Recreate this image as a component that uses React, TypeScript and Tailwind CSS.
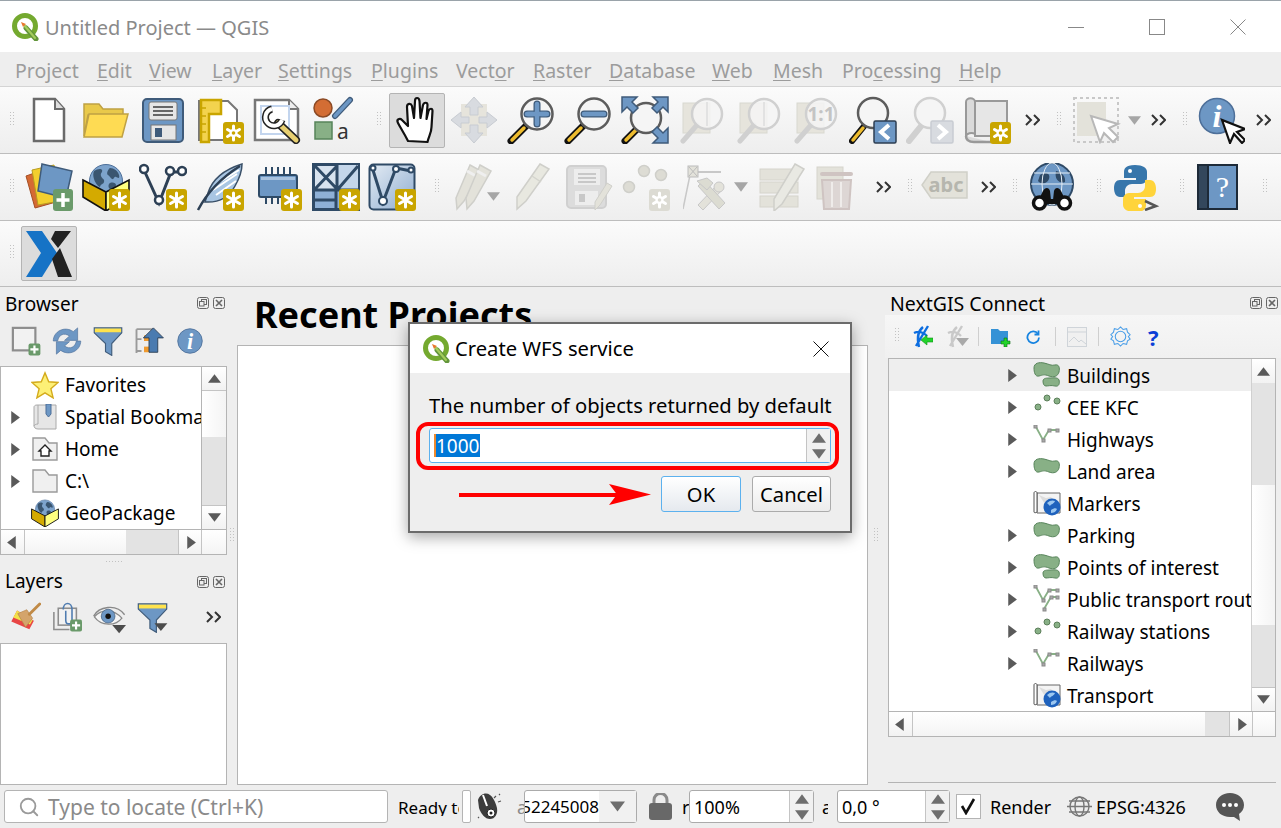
import React from 'react'
import { Search } from 'lucide-react'

const Ic = ({ children, size = 48 }: { children: React.ReactNode; size?: number }) => (
  <svg width={size} height={size} viewBox="0 0 48 48" className="shrink-0">
    {children}
  </svg>
)

const Grip = ({ className = '', h = 17 }: { className?: string; h?: number }) => (
  <div className={`flex shrink-0 items-center ${className}`}>
    <svg width="5" height={h}>
      {Array.from({ length: Math.floor(h / 3) }).map((_, i) => (
        <g key={i} fill="#c2c2c2">
          <rect x="0" y={i * 3} width="1" height="1" />
          <rect x="3" y={i * 3} width="1" height="1" />
        </g>
      ))}
    </svg>
  </div>
)

const Chevrons = ({ className = '' }: { className?: string }) => (
  <div className={`flex shrink-0 items-center justify-center ${className}`}>
    <svg width="15" height="12" fill="none" stroke="#333" strokeWidth="2">
      <path d="M1 1l5 5-5 5M9 1l5 5-5 5" />
    </svg>
  </div>
)

const Tri = ({ dir, c = '#5a5a5a', s = 12 }: { dir: 'up' | 'down' | 'left' | 'right'; c?: string; s?: number }) => {
  const d = { up: 'M6 2l6 8H0z', down: 'M0 2h12l-6 8z', left: 'M9 0v12L1 6z', right: 'M3 0l8 6-8 6z' }[dir]
  return (
    <svg width={s} height={s} viewBox="0 0 12 12" className="shrink-0">
      <path d={d} fill={c} />
    </svg>
  )
}

const Slot = ({ children, className = 'w-[57px]' }: { children: React.ReactNode; className?: string }) => (
  <div className={`flex shrink-0 items-center justify-center ${className}`}>{children}</div>
)

const StarBadge = ({ gear = false, fill = '#c9a500' }: { gear?: boolean; fill?: string }) => (
  <g>
    <rect x="27" y="26" width="21" height="22" rx="3" fill={fill} />
    <path d="M37.5 30v14M31.5 33.5l12 7M31.5 40.5l12-7" stroke="#fff" strokeWidth="3" strokeLinecap="round" />
    {gear && <circle cx="37.5" cy="37" r="4" fill="#fff" />}
    {gear && <circle cx="37.5" cy="37" r="1.8" fill={fill} />}
  </g>
)

const PlusBadge = () => (
  <g>
    <rect x="28" y="26" width="20" height="22" rx="3" fill="#6a9a6a" />
    <path d="M38 30v14M31.5 37h13" stroke="#fff" strokeWidth="3.5" />
  </g>
)

const Handle = () => (
  <g>
    <path d="M20 29L4 45" stroke="#111" strokeWidth="7" strokeLinecap="round" />
    <path d="M17 32L5 44" stroke="#eebc2e" strokeWidth="3.5" strokeLinecap="round" />
  </g>
)

const NewDoc = () => (
  <Ic>
    <path d="M9 3h21l9 10v32H9z" fill="#fff" stroke="#6a6a6a" strokeWidth="2.5" />
    <path d="M30 3v10h9" fill="#ddd" stroke="#6a6a6a" strokeWidth="2" />
  </Ic>
)

const Folder = () => (
  <Ic>
    <path d="M2 8h15l4 5h20v6H6L2 40z" fill="#e9c94a" stroke="#bfa144" strokeWidth="1.5" />
    <path d="M7 18h39l-6 23H2z" fill="#fedb53" stroke="#bfa144" strokeWidth="1.5" />
  </Ic>
)

const Save = () => (
  <Ic>
    <rect x="4" y="3" width="40" height="43" rx="4" fill="#6d97c4" stroke="#3f5b7a" strokeWidth="2" />
    <rect x="10" y="6" width="28" height="18" rx="2" fill="#e6e6e6" stroke="#777" />
    <path d="M14 11h20M14 15h20M14 19h20" stroke="#666" strokeWidth="2" />
    <rect x="12" y="29" width="25" height="15" fill="#e6e6e6" stroke="#777" />
    <rect x="16" y="32" width="7" height="9" fill="#3f5b7a" />
  </Ic>
)

const LayoutIcon = () => (
  <Ic>
    <path d="M3 5h29l9 9v30H3z" fill="#fff" stroke="#777" strokeWidth="2" />
    <path d="M5 4h20v14H13v28H5z" fill="#f3d34e" stroke="#c9a500" strokeWidth="2.5" />
    <path d="M5 12h5M5 20h5M5 28h5M5 36h5" stroke="#c9a500" strokeWidth="1.5" />
    <StarBadge gear />
  </Ic>
)

const LayoutManager = () => (
  <Ic>
    <path d="M2 4h34l9 9v31H2z" fill="#fff" stroke="#777" strokeWidth="2.5" />
    <path d="M36 4v9h9" fill="#eee" stroke="#777" strokeWidth="2" />
    <path d="M8 10h28v28H8z" fill="none" stroke="#c3d5ee" strokeWidth="2" />
    <path d="M25 27l18 17" stroke="#222" strokeWidth="8" strokeLinecap="round" />
    <path d="M25 27l18 17" stroke="#e7cf71" strokeWidth="5" strokeLinecap="round" />
    <path d="M19 13A8.500 8.500 0 1 0 29 24" fill="none" stroke="#222" strokeWidth="7" />
    <path d="M19 13A8.500 8.500 0 1 0 29 24" fill="none" stroke="#fff" strokeWidth="4" />
  </Ic>
)

const StyleManager = () => (
  <Ic>
    <circle cx="13" cy="12" r="9" fill="#d36d34" stroke="#8c4a24" strokeWidth="1.5" />
    <path d="M25 20L40 4" stroke="#3f5b7a" strokeWidth="6" strokeLinecap="round" />
    <path d="M25 20L40 4" stroke="#6d97c4" strokeWidth="3.5" strokeLinecap="round" />
    <rect x="5" y="26" width="17" height="17" fill="#88b086" stroke="#57845a" strokeWidth="1.5" />
    <text x="27" y="43" fontSize="21" fontFamily="Noto Sans, sans-serif" fill="#333">a</text>
  </Ic>
)

const HandIcon = () => (
  <Ic>
    <path
      d="M15 45C11 37 7 31 5 27c-2-4 2-5 4-3l6 6L14 11c0-4 4-4 5-1l2 12 1-17c0-4 4-4 4.500 0l1 17 2.500-13c1-3 4.500-3 4.500 0l-1 14 2-8c1-3 4-3 4 0l-1 16c0 6-3 10-4 15z"
      fill="#fff"
      stroke="#111"
      strokeWidth="2.2"
      strokeLinejoin="round"
    />
  </Ic>
)

const PanSel = () => (
  <Ic>
    <rect x="11" y="8" width="26" height="32" fill="#e6e4dc" />
    <path d="M24 1l9 10h-5v8h-8v-8h-5zM24 47l-9-10h5v-8h8v8h5zM1 24l10-8v5h8v6h-8v5zM47 24l-10 8v-5h-8v-6h8v-5z" fill="#d8dbe0" stroke="#c8ccd2" />
  </Ic>
)

const ZoomIn = ({ minus = false }: { minus?: boolean }) => (
  <Ic>
    <Handle />
    <circle cx="30" cy="18" r="15.5" fill="#f5f5f5" stroke="#5c5c5c" strokeWidth="2.5" />
    <path d="M20 18h20" stroke="#3f5b7a" strokeWidth="7" strokeLinecap="round" />
    <path d="M20 18h20" stroke="#6d97c4" strokeWidth="4.5" strokeLinecap="round" />
    {!minus && <path d="M30 8v20" stroke="#3f5b7a" strokeWidth="7" strokeLinecap="round" />}
    {!minus && <path d="M30 8v20M21 18h18" stroke="#6d97c4" strokeWidth="4.5" strokeLinecap="round" />}
  </Ic>
)

const ZoomFull = () => (
  <Ic>
    <Handle />
    <circle cx="25" cy="22" r="15" fill="#f5f5f5" stroke="#5c5c5c" strokeWidth="2.5" />
    <g fill="#6d97c4" stroke="#3f5b7a" strokeWidth="1.5">
      <path d="M1 1h15l-5 5 6 6-5 5-6-6-5 5zM47 1v15l-5-5-6 6-5-5 6-6-5-5zM47 47H32l5-5-6-6 5-5 6 6 5-5z" />
    </g>
  </Ic>
)

const ZoomDisabled = ({ label }: { label?: string }) => (
  <Ic>
    <rect x="5" y="7" width="27" height="30" fill="#e6e4dc" stroke="#d8d8d0" />
    <path d="M19 29L5 45" stroke="#d0d0d0" strokeWidth="5" strokeLinecap="round" />
    <circle cx="29" cy="18" r="15" fill="#f5f5f5" fillOpacity="0.85" stroke="#d0d0d0" strokeWidth="2.5" />
    {label ? (
      <text x="29" y="25" textAnchor="middle" fontSize="19" fontWeight="700" fontFamily="Noto Sans, sans-serif" fill="#c4c4c4">{label}</text>
    ) : (
      <path d="M29 6v24" stroke="#dcdcdc" strokeWidth="1.5" />
    )}
  </Ic>
)

const ZoomHist = ({ next = false }: { next?: boolean }) => (
  <Ic>
    <path d="M16 29L3 45" stroke={next ? '#d0d0d0' : '#111'} strokeWidth="6" strokeLinecap="round" />
    {!next && <path d="M14 32L4 44" stroke="#eebc2e" strokeWidth="3.5" strokeLinecap="round" />}
    <circle cx="24" cy="17" r="15" fill="#f5f5f5" stroke={next ? '#d0d0d0' : '#5c5c5c'} strokeWidth="2.5" />
    <rect x="25" y="25" width="22" height="22" rx="1.5" fill={next ? '#d8dbe0' : '#6d97c4'} stroke={next ? '#c8ccd2' : '#2d3e52'} strokeWidth="1.5" />
    <path d={next ? 'M32 29l8 7-8 7' : 'M40 29l-8 7 8 7'} fill="none" stroke="#fff" strokeWidth="4" />
  </Ic>
)

const BookmarkNew = () => (
  <Ic>
    <path d="M12 5h32v35H12z" fill="#e6e6e6" stroke="#999" strokeWidth="2" />
    <path d="M3 6c0-5 9-5 9 0v32c-3-2-9-1-9 3z" fill="#dadada" stroke="#999" strokeWidth="2" />
    <path d="M3 40c0 5 4 6 8 6h17" fill="#dadada" stroke="#999" strokeWidth="2.5" />
    <StarBadge gear />
  </Ic>
)

const SelectIcon = () => (
  <Ic>
    <rect x="1" y="2" width="44" height="44" fill="none" stroke="#c8c8c8" strokeWidth="2" strokeDasharray="3 3" />
    <rect x="4" y="6" width="29" height="34" fill="#e3e2da" />
    <path d="M18 20l9 26 4-9 9 9 5-5-9-9 9-4z" fill="#fff" stroke="#b8b8b8" strokeWidth="2" />
  </Ic>
)

const InfoIcon = ({ cursor = false, size = 48 }: { cursor?: boolean; size?: number }) => (
  <Ic size={size}>
    <circle cx={cursor ? 20 : 24} cy={cursor ? 20 : 24} r={cursor ? 17.5 : 21} fill="#6d97c4" stroke="#4d6f99" strokeWidth="1.5" />
    <text x={cursor ? 20 : 24} y={cursor ? 31 : 37} textAnchor="middle" fontSize={cursor ? 32 : 38} fontWeight="700" fontStyle="italic" fontFamily="Liberation Serif, serif" fill="#fff">i</text>
    {cursor && <path d="M25 24l8 23 4-9 8 9 3-3-8-8 8-3z" fill="#fff" stroke="#111" strokeWidth="2.2" />}
  </Ic>
)

const DataSource = () => (
  <Ic>
    <path d="M1 13l20-7 10 33-21 6z" fill="#d56a33" stroke="#a44e24" />
    <path d="M7 7l22-5 6 36-22 4z" fill="#f3cf2e" stroke="#b89c20" />
    <path d="M17 1l30 7-6 27-28-7z" fill="#6d97c4" stroke="#3f5b7a" strokeWidth="1.5" />
    <PlusBadge />
  </Ic>
)

const GeoPackage = ({ badge = true }: { badge?: boolean }) => (
  <Ic>
    <circle cx="24" cy="18" r="16.500" fill="#7da3cc" stroke="#4d6f99" />
    <path d="M12 8c3-2 7-3 8-1s-2 3-1 6 4 3 3 6-3 1-4 5c-3-1-5-5-6-8s-1-6 0-8zM28 5c4 0 8 3 9 7s-1 3-3 2-2 3-4 2-2-3-4-4 0-6 2-7zM28 20c3-1 6 0 6 2s-4 5-6 4-2-5 0-6z" fill="#3a5570" />
    <path d="M1 17l23 12v19L1 34z" fill="#d4aa00" stroke="#111" strokeWidth="1.6" />
    <path d="M24 29l23-12v17L24 48z" fill="#ffff80" stroke="#111" strokeWidth="1.6" />
    {badge && <StarBadge />}
  </Ic>
)

const VLine = () => (
  <Ic>
    <path d="M5 7l15 33L32 9h10" fill="none" stroke="#2d4055" strokeWidth="3" />
    <g fill="#fff" stroke="#2d4055" strokeWidth="2.5">
      <circle cx="5" cy="6" r="4" />
      <circle cx="20" cy="37" r="4" />
      <circle cx="31" cy="8" r="4" />
      <circle cx="43" cy="8" r="4" />
    </g>
    <StarBadge />
  </Ic>
)

const Feather = () => (
  <Ic>
    <path d="M46 1C30 6 17 14 12 30l-3 9c14 1 24-5 30-16 4-7 7-14 7-22z" fill="#a9c6e3" stroke="#3a5068" strokeWidth="1.5" />
    <path d="M20 32l20-14M17 27l24-16M22 20l21-13" stroke="#fff" strokeWidth="2" />
    <path d="M44 3C28 13 12 28 2 47" fill="none" stroke="#2d4055" strokeWidth="2.5" />
    <StarBadge />
  </Ic>
)

const Chip = () => (
  <Ic>
    <path d="M12 4v8M18 4v8M24 4v8M30 4v8M36 4v8M12 34v7M18 34v7M24 34v7" stroke="#2e4a66" strokeWidth="2" />
    <rect x="5" y="12" width="38" height="22" rx="2" fill="#6d97c4" stroke="#2e4a66" strokeWidth="2" />
    <rect x="7" y="14" width="34" height="3" fill="#a8c2de" />
    <StarBadge />
  </Ic>
)

const GridIcon = () => (
  <Ic>
    <rect x="1.5" y="1.5" width="45" height="45" fill="#8eb0d6" stroke="#2f4a66" strokeWidth="3" />
    <path d="M26 2h20v24H26z" fill="#c4d6ea" />
    <path d="M3 3h22v23H3z" fill="#d8e3ef" />
    <path d="M2 27h44M25 2v24M24 27v19M2 37h22M3 3l22 23M25 3L3 26M46 3L26 26" stroke="#2f4a66" strokeWidth="3" fill="none" />
    <StarBadge />
  </Ic>
)

const MeshIcon = () => (
  <Ic>
    <defs>
      <linearGradient id="mesh" x1="0" y1="0" x2="1" y2="1">
        <stop offset="0" stopColor="#e4ecf4" />
        <stop offset="1" stopColor="#8eacd0" />
      </linearGradient>
    </defs>
    <rect x="1.5" y="1.5" width="45" height="45" rx="4" fill="url(#mesh)" stroke="#2f4a66" strokeWidth="2" />
    <path d="M4 4l11 35L28 5l15 3" fill="none" stroke="#2f4a66" strokeWidth="3" />
    <g fill="#fff" stroke="#2f4a66" strokeWidth="2">
      <circle cx="15" cy="38" r="4" />
      <circle cx="28" cy="6" r="3" />
      <circle cx="5" cy="5" r="2.5" />
      <circle cx="43" cy="7" r="2.5" />
    </g>
    <StarBadge />
  </Ic>
)

const Pencil = ({ x = 0 }: { x?: number }) => (
  <g transform={`translate(${x} 0)`}>
    <path d="M16 2l11 6L10 38l-7 8-1-11z" fill="#e3e2da" stroke="#cfcfca" strokeWidth="1.5" />
    <path d="M13 8l9 5" stroke="#efefef" strokeWidth="3" />
  </g>
)

const PencilsIcon = () => (
  <Ic>
    <Pencil />
    <Pencil x={10} />
  </Ic>
)

const PencilIcon = () => (
  <Ic>
    <path d="M34 1l9 5-23 32-9 8 0-12z" fill="#e8e8e0" stroke="#cfcfca" strokeWidth="1.5" />
    <path d="M26 13l9 6" stroke="#d4d4ce" strokeWidth="1.5" />
  </Ic>
)

const SaveEdits = () => (
  <Ic>
    <rect x="2" y="3" width="39" height="42" rx="4" fill="#dcdcdc" stroke="#d0d0d0" strokeWidth="2" />
    <rect x="9" y="6" width="26" height="16" fill="#ededed" />
    <path d="M13 11h18M13 15h18M13 19h18" stroke="#c8c8c8" strokeWidth="2" />
    <rect x="10" y="28" width="23" height="14" fill="#ededed" />
    <rect x="14" y="31" width="6" height="8" fill="#c8c8c8" />
    <path d="M42 20l5 3-12 19-5 5v-8z" fill="#e3e2da" stroke="#cfcfca" />
  </Ic>
)

const AddPoint = () => (
  <Ic>
    <g fill="#dddcd4" stroke="#cfcfca" strokeWidth="1.5">
      <circle cx="7" cy="24" r="5.5" />
      <circle cx="22" cy="8" r="5.5" />
      <circle cx="39" cy="12" r="5.5" />
    </g>
    <StarBadge gear fill="#dcdbd3" />
  </Ic>
)

const VertexTool = () => (
  <Ic>
    <path d="M7 12L0 46" stroke="#c8c8c8" strokeWidth="1.5" />
    <path d="M14 9h24" stroke="#c8c8c8" strokeWidth="2" />
    <rect x="5" y="3" width="10" height="11" fill="#e3e2da" stroke="#bbb" />
    <path d="M6 4l8 9M14 4l-8 9" stroke="#bbb" />
    <path d="M34 22l-19 20 5 5 19-20z" fill="#e3e2da" stroke="#c8c8c8" />
    <path d="M15 23l21 23 6-6-21-23z" fill="#dcdcd2" stroke="#c8c8c8" />
    <path d="M14 18l10-3 6 5-6 7z" fill="#dcdcd2" stroke="#c8c8c8" />
    <circle cx="36" cy="24" r="5" fill="#e3e2da" stroke="#c8c8c8" />
  </Ic>
)

const EditTable = () => (
  <Ic>
    <g fill="#e3e2da" stroke="#d5d4cc">
      <rect x="2" y="6" width="38" height="11" />
      <rect x="2" y="19" width="38" height="11" />
      <rect x="2" y="33" width="38" height="11" />
    </g>
    <path d="M37 1l9 5-22 35-8 7 0-12z" fill="#e9e9e3" stroke="#cfcfca" strokeWidth="1.5" />
  </Ic>
)

const TrashIcon = () => (
  <Ic>
    <rect x="5" y="4" width="26" height="32" fill="#e3e2da" stroke="#d5d4cc" />
    <rect x="8" y="9" width="33" height="4" rx="2" fill="#cfc4c2" />
    <path d="M10 17h29l-2 29H12z" fill="#ddd6d4" stroke="#cfc4c2" strokeWidth="2" />
    <path d="M20 19v25M29 19v25" stroke="#efecea" strokeWidth="2" />
  </Ic>
)

const AbcLabel = () => (
  <Ic>
    <path d="M11 9h36v26H11L2 22z" fill="#e3e2da" stroke="#d0d0c8" strokeWidth="1.5" />
    <text x="26" y="29" textAnchor="middle" fontSize="20" fontWeight="700" fontFamily="Noto Sans, sans-serif" fill="#b6b6ae">abc</text>
  </Ic>
)

const GlobeBinoc = () => (
  <Ic>
    <circle cx="24" cy="21" r="21" fill="#6d97c4" stroke="#2f4a66" strokeWidth="2" />
    <path d="M12 12c5-4 11-2 9 4-2 5-8 6-11 2zM28 8c6 1 10 6 9 11-5 2-11-2-9-11z" fill="#2f4a66" />
    <g fill="none" stroke="#e6eef6" strokeWidth="1">
      <ellipse cx="24" cy="21" rx="10" ry="21" />
      <path d="M3 21h42M6 10h36" />
    </g>
    <path d="M15 28c2-4 6-4 7 0l1 9h2l1-9c1-4 5-4 7 0l6 12H9z" fill="#111" />
    <circle cx="11.5" cy="40" r="6" fill="#fff" stroke="#111" strokeWidth="3.5" />
    <circle cx="36.5" cy="40" r="6" fill="#fff" stroke="#111" strokeWidth="3.5" />
    <rect x="18" y="36" width="12" height="5" fill="#111" />
  </Ic>
)

const PythonIcon = () => {
  const snake = 'M22 2c-10 0-11 4-11 7v6h12v2H7c-4 0-6 3-6 8s2 9 6 9h5v-6c0-4 3-7 7-7h9c3 0 6-3 6-6V9c0-4-4-7-12-7z'
  return (
    <Ic>
      <path d={snake} fill="#3776ab" />
      <circle cx="17" cy="8" r="2" fill="#fff" />
      <g transform="rotate(180 22 25.5)">
        <path d={snake} fill="#ffd43b" />
        <circle cx="17" cy="8" r="2" fill="#fff" />
      </g>
      <path d="M32 38l11 5-11 4" fill="none" stroke="#555" strokeWidth="2.5" />
    </Ic>
  )
}

const HelpBook = () => (
  <Ic>
    <rect x="3" y="1" width="41" height="46" fill="#1d2a38" />
    <rect x="5" y="3" width="8" height="42" fill="#33475c" />
    <rect x="15" y="3" width="27" height="42" fill="#6d97c4" />
    <text x="28.5" y="34" textAnchor="middle" fontSize="30" fontFamily="Liberation Serif, serif" fill="#fff">?</text>
  </Ic>
)

const QLogo = ({ size = 28 }: { size?: number }) => (
  <svg width={size} height={size} viewBox="0 0 28 28" className="shrink-0">
    <circle cx="13" cy="13" r="10.5" fill="none" stroke="#74a92f" strokeWidth="5" />
    <path d="M14 15l10 11" stroke="#62953a" strokeWidth="5" strokeLinecap="round" />
    <path d="M12 12l11 13" stroke="#a3cc5a" strokeWidth="2.2" strokeLinecap="round" />
    <path d="M9 9l5 2-3 3z" fill="#e8782e" />
  </svg>
)

const LogoX = () => (
  <svg width="48" height="50" viewBox="0 0 48 50">
    <path d="M1 2h16l15 22-15 24H1l15-24z" fill="#1673c6" />
    <path d="M30 2h16L33 19l-7-9zM27 30l8-11 12 29H33z" fill="#222" />
  </svg>
)

const NewLayer = () => (
  <Ic size={30}>
    <rect x="3" y="3" width="36" height="36" fill="#f2f2f2" stroke="#8d8d8d" strokeWidth="3.5" />
    <rect x="28" y="28" width="19" height="19" rx="3" fill="#6a9a6a" />
    <path d="M37.5 31v13M31 37.5h13" stroke="#fff" strokeWidth="3.5" />
  </Ic>
)

const RefreshIcon = () => (
  <Ic size={30}>
    <path d="M2 24C2 9 20-1 34 9l7-6v20H20l8-7c-9-6-17-2-19 8z" fill="#6d97c4" stroke="#4d6f99" strokeWidth="1" />
    <path d="M46 24C46 39 28 49 14 39l-7 6V25h21l-8 7c9 6 17 2 19-8z" fill="#6d97c4" stroke="#4d6f99" strokeWidth="1" />
  </Ic>
)

const FilterIcon = ({ down = false, size = 30 }: { down?: boolean; size?: number }) => (
  <Ic size={size}>
    <path d="M2 3h44v8L30 28v19l-10-6V28L2 11z" fill="#6d97c4" stroke="#3f5b7a" strokeWidth="1.8" />
    <path d="M3 4h42v6H3z" fill="#ffe34d" />
    {down && <path d="M27 33h20l-10 12z" fill="#4c4c4c" />}
  </Ic>
)

const CollapseIcon = () => (
  <Ic size={30}>
    <path d="M4 5v38M4 5h26M4 21h8M4 40h8" stroke="#9a9a9a" strokeWidth="3" fill="none" />
    <rect x="16" y="15" width="9" height="9" fill="#f09a2e" />
    <rect x="16" y="33" width="9" height="9" fill="#f09a2e" />
    <path d="M31 3L15 19h9v23h14V19h9z" fill="#4a7bb0" stroke="#2d4055" strokeWidth="1.5" />
  </Ic>
)

const BrushIcon = () => (
  <Ic size={31}>
    <path d="M2 30l9-17 26 16-7 13z" fill="#e84545" />
    <path d="M5 24l6-11 24 15-4 7z" fill="#f3e24a" />
    <path d="M12 18l14-6 9 13-11 14z" fill="#d4a46b" stroke="#b57f43" />
    <path d="M30 19L46 3" stroke="#c08a47" strokeWidth="4.5" strokeLinecap="round" />
  </Ic>
)

const ClipIcon = () => (
  <Ic size={30}>
    <path d="M3 16v28h25" fill="none" stroke="#8d8d8d" strokeWidth="2.5" />
    <rect x="10" y="10" width="29" height="27" fill="#f2f2f2" stroke="#8d8d8d" strokeWidth="2.5" />
    <path d="M18 12c0-13 14-13 14 0v17c0 8-10 8-10 0V14" fill="none" stroke="#4f7cb0" strokeWidth="2.5" />
    <rect x="29" y="28" width="19" height="19" rx="3" fill="#6a9a6a" />
    <path d="M38.5 31v13M32 37.5h13" stroke="#fff" strokeWidth="3.5" />
  </Ic>
)

const EyeIcon = () => (
  <Ic size={33}>
    <path d="M1 22C8 8 34 3 46 20" fill="none" stroke="#888" strokeWidth="2" />
    <path d="M2 23c10-12 28-12 40 2-9 12-30 12-40-2z" fill="#f5f5f5" stroke="#8a8a8a" strokeWidth="1.8" />
    <circle cx="22" cy="22" r="10" fill="#6d97c4" stroke="#3f5b7a" />
    <circle cx="22" cy="22" r="4" fill="#111" />
    <path d="M28 35h20l-10 12z" fill="#4c4c4c" />
  </Ic>
)

const FloatBtns = () => (
  <div className="flex items-center gap-[4px]">
    <svg width="12" height="12" fill="none" stroke="#666">
      <rect x="0.5" y="0.5" width="11" height="11" rx="2" />
      <rect x="4.5" y="2.5" width="5" height="5" />
      <rect x="2.5" y="4.5" width="4.500" height="4.500" fill="#eee" />
    </svg>
    <svg width="12" height="12" fill="none" stroke="#666">
      <rect x="0.5" y="0.5" width="11" height="11" rx="2" />
      <path d="M3 3l6 6M9 3l-6 6" strokeWidth="1.6" />
    </svg>
  </div>
)

const TreeStar = () => (
  <svg width="28" height="28" viewBox="0 0 30 30">
    <path d="M15 2l4 9.5 10 .8-7.7 6.6 2.4 9.9L15 23.5l-8.7 5.3 2.4-9.9L1 12.3l10-.8z" fill="#fdf076" stroke="#d4ab1d" strokeWidth="1.5" />
  </svg>
)

const TreeBookmark = () => (
  <svg width="26" height="26" viewBox="0 0 26 26">
    <path d="M5 1h19v24H6c-3 0-4-2-4-3V3c0-1 1-2 3-2z" fill="#e6e6e6" stroke="#aaa" />
    <path d="M6 1v19c-2 0-4 1-4 2" fill="none" stroke="#aaa" />
    <path d="M14 0h5v10l-2.500 3-2.500-3z" fill="#6d97c4" stroke="#4d6f99" />
  </svg>
)

const TreeFolder = ({ home = false }: { home?: boolean }) => (
  <svg width="26" height="24" viewBox="0 0 26 24">
    <path d="M1 1h12l4 5h8v17H1z" fill="#f0f0f0" stroke="#9a9a9a" strokeWidth="1.4" />
    {home && <path d="M13 8l-6 6h2v5h8v-5h2z" fill="#fff" stroke="#222" strokeWidth="1.4" />}
  </svg>
)

const GreenBlob = ({ two = false }: { two?: boolean }) => (
  <svg width="28" height="28" viewBox="0 0 28 28">
    <path d="M1 7c0-5 5-6 10-5s7 3 11 2 5 3 4 7-5 6-10 4-6-1-10 0-5-4-5-8z" fill="#88b086" stroke="#57845a" />
    {two && <path d="M10 20c0-3 4-3 7-3s8-1 9 2 0 7-4 6-7 0-9 0-3-2-3-5z" fill="#88b086" stroke="#57845a" />}
  </svg>
)

const GreenPoints = () => (
  <svg width="28" height="28" viewBox="0 0 28 28">
    <g fill="#88b086" stroke="#5d7f5b">
      <circle cx="5" cy="14" r="3" />
      <circle cx="14" cy="5" r="3" />
      <circle cx="24" cy="8" r="3" />
    </g>
  </svg>
)

const GreenLines = ({ two = false }: { two?: boolean }) => (
  <svg width="28" height="28" viewBox="0 0 28 28">
    <path d="M3 2l7 13 6-10h10" fill="none" stroke="#88b086" strokeWidth="1.8" />
    {two && <path d="M11 24l7-12h8" fill="none" stroke="#88b086" strokeWidth="1.8" />}
    <g fill="#a8a8a8" stroke="#8a8a8a">
      <rect x="1" y="0" width="3" height="3" />
      <rect x="9" y="14" width="3" height="3" />
      <rect x="15" y="4" width="3" height="3" />
      <rect x="23" y="4" width="3" height="3" />
      {two && <rect x="10" y="23" width="3" height="3" />}
      {two && <rect x="17" y="11" width="3" height="3" />}
      {two && <rect x="23" y="11" width="3" height="3" />}
    </g>
  </svg>
)

const WmsIcon = () => (
  <svg width="28" height="26" viewBox="0 0 28 26">
    <path d="M4 3h23v20H4z" fill="#f4f4f4" stroke="#666" />
    <path d="M1 3c0-2 3-2 3 0v19c-1 1-3 1-3 0z" fill="#fff" stroke="#555" />
    <path d="M6 5l7 3 5-1 3 4-9 3z" fill="#ddd" />
    <circle cx="19" cy="17" r="8.500" fill="#1f62bd" />
    <path d="M14 13c3-3 6-3 8-2-1 3-4 3-5 5zM18 20c3-2 5-2 6-1-1 3-4 4-6 4z" fill="#9cc7f0" />
  </svg>
)

const SpinBox = ({ value, className }: { value: string; className: string }) => (
  <div className={`flex shrink-0 rounded-[3px] border border-[#ababab] bg-white ${className}`}>
    <div className="flex min-w-0 flex-1 items-center overflow-hidden pl-[4px]">{value}</div>
    <div className="flex w-[24px] shrink-0 flex-col items-center justify-center gap-[2px] border-l border-[#c4c4c4] bg-[#f1f1f1]">
      <Tri dir="up" s={14} c="#6e6e6e" />
      <Tri dir="down" s={14} c="#6e6e6e" />
    </div>
  </div>
)

const ScrollBtn = ({ dir, className }: { dir: 'up' | 'down' | 'left' | 'right'; className: string }) => (
  <div className={`flex shrink-0 items-center justify-center bg-gradient-to-b from-white to-[#f2f2f2] ${className}`}>
    <Tri dir={dir} s={13} />
  </div>
)

const browserRows = [
  { label: 'Favorites', icon: <TreeStar />, arrow: false },
  { label: 'Spatial Bookmarks', icon: <TreeBookmark />, arrow: true },
  { label: 'Home', icon: <TreeFolder home />, arrow: true },
  { label: 'C:\\', icon: <TreeFolder />, arrow: true },
  { label: 'GeoPackage', icon: <GeoPackage badge={false} />, arrow: false, small: true },
]

const connectRows = [
  { label: 'Buildings', icon: <GreenBlob two />, arrow: true, active: true },
  { label: 'CEE KFC', icon: <GreenPoints />, arrow: true },
  { label: 'Highways', icon: <GreenLines />, arrow: true },
  { label: 'Land area', icon: <GreenBlob />, arrow: true },
  { label: 'Markers', icon: <WmsIcon />, arrow: false },
  { label: 'Parking', icon: <GreenBlob />, arrow: true },
  { label: 'Points of interest', icon: <GreenBlob two />, arrow: true },
  { label: 'Public transport routes', icon: <GreenLines two />, arrow: true },
  { label: 'Railway stations', icon: <GreenPoints />, arrow: true },
  { label: 'Railways', icon: <GreenLines />, arrow: true },
  { label: 'Transport', icon: <WmsIcon />, arrow: false },
]

const menu = [
  { before: 'Pro', key: 'j', after: 'ect', w: 'w-[82px]' },
  { before: '', key: 'E', after: 'dit', w: 'w-[52px]' },
  { before: '', key: 'V', after: 'iew', w: 'w-[63px]' },
  { before: '', key: 'L', after: 'ayer', w: 'w-[66px]' },
  { before: '', key: 'S', after: 'ettings', w: 'w-[93px]' },
  { before: '', key: 'P', after: 'lugins', w: 'w-[85px]' },
  { before: 'Vect', key: 'o', after: 'r', w: 'w-[77px]' },
  { before: '', key: 'R', after: 'aster', w: 'w-[76px]' },
  { before: '', key: 'D', after: 'atabase', w: 'w-[103px]' },
  { before: '', key: 'W', after: 'eb', w: 'w-[61px]' },
  { before: '', key: 'M', after: 'esh', w: 'w-[69px]' },
  { before: 'Pro', key: 'c', after: 'essing', w: 'w-[117px]' },
  { before: '', key: 'H', after: 'elp', w: 'w-[60px]' },
]

const toolbarBg = 'flex shrink-0 items-center bg-gradient-to-b from-[#fbfbfb] to-[#eeeeee] border-b border-[#bdbdbd]'

export default function App() {
  return (
    <div className="relative flex h-[828px] w-[1281px] flex-col overflow-hidden bg-[#eeeeee] font-['Noto_Sans',sans-serif] text-[19px] leading-none text-black">
      {/* title bar */}
      <div className="flex h-[52px] shrink-0 items-center border-t border-[#9aa3aa] bg-white pl-[12px] pr-[3px] text-[#8a8a8a]">
        <QLogo />
        <span className="ml-[5px] pt-[2px] text-[20px]">Untitled Project — QGIS</span>
        <div className="ml-auto flex items-center">
          <Slot className="w-[81px]">
            <svg width="16" height="16" stroke="#888"><path d="M0 8.500h16" /></svg>
          </Slot>
          <Slot className="w-[81px]">
            <svg width="16" height="16" fill="none" stroke="#888"><rect x="0.5" y="0.5" width="15" height="15" /></svg>
          </Slot>
          <Slot className="w-[81px]">
            <svg width="16" height="16" stroke="#888"><path d="M0.5 0.5l15 15M15.500 0.5l-15 15" /></svg>
          </Slot>
        </div>
      </div>

      {/* menu bar */}
      <div className="flex h-[35px] shrink-0 items-center border-b border-[#d4d4d4] bg-[#eeeeee] pl-[15px] pt-[3px] text-[19.500px] text-[#9c9c9c]">
        {menu.map(m => (
          <span key={m.after + m.key} className={`shrink-0 ${m.w}`}>
            {m.before}
            <span className="underline underline-offset-2">{m.key}</span>
            {m.after}
          </span>
        ))}
      </div>

      {/* toolbar 1 */}
      <div className={`h-[67px] ${toolbarBg}`}>
        <Grip className="ml-[10px] w-[10px]" />
        <Slot><NewDoc /></Slot>
        <Slot><Folder /></Slot>
        <Slot><Save /></Slot>
        <Slot><LayoutIcon /></Slot>
        <Slot><LayoutManager /></Slot>
        <Slot><StyleManager /></Slot>
        <Grip className="w-[26.500px] pl-[15px]" />
        <Slot>
          <div className="flex h-[55px] w-[56px] items-center justify-center rounded-[2px] border border-[#b4b4b4] bg-[#dcdcdc]">
            <HandIcon />
          </div>
        </Slot>
        <Slot><PanSel /></Slot>
        <Slot><ZoomIn /></Slot>
        <Slot><ZoomIn minus /></Slot>
        <Slot><ZoomFull /></Slot>
        <Slot><ZoomDisabled /></Slot>
        <Slot><ZoomDisabled /></Slot>
        <Slot><ZoomDisabled label="1:1" /></Slot>
        <Slot><ZoomHist /></Slot>
        <Slot><ZoomHist next /></Slot>
        <Slot><BookmarkNew /></Slot>
        <Chevrons className="w-[34px]" />
        <Grip className="w-[19px] pl-[7px]" />
        <Slot><SelectIcon /></Slot>
        <Slot className="w-[18px]"><Tri dir="down" c="#a6a6a6" s={13} /></Slot>
        <Chevrons className="w-[30px]" />
        <Grip className="w-[22px] pl-[9px]" />
        <Slot className="w-[50px]"><InfoIcon cursor /></Slot>
        <Chevrons className="w-[36px]" />
      </div>

      {/* toolbar 2 */}
      <div className={`h-[67px] ${toolbarBg}`}>
        <Grip className="ml-[10px] w-[10px]" />
        <Slot><DataSource /></Slot>
        <Slot><GeoPackage /></Slot>
        <Slot><VLine /></Slot>
        <Slot><Feather /></Slot>
        <Slot className="w-[60px]"><Chip /></Slot>
        <Slot className="w-[55px]"><GridIcon /></Slot>
        <Slot><MeshIcon /></Slot>
        <Grip className="w-[26px] pl-[15px]" />
        <Slot className="w-[40px] justify-start pl-[8px]"><PencilsIcon /></Slot>
        <Slot className="w-[14px] pt-[18px]"><Tri dir="down" c="#a6a6a6" s={13} /></Slot>
        <Slot className="w-[60px]"><PencilIcon /></Slot>
        <Slot><SaveEdits /></Slot>
        <Slot><AddPoint /></Slot>
        <Slot className="w-[57px] justify-start pl-[9px]"><VertexTool /></Slot>
        <Slot className="w-[19px]"><Tri dir="down" c="#a6a6a6" s={14} /></Slot>
        <Slot className="w-[64px]"><EditTable /></Slot>
        <Slot className="w-[44px]"><TrashIcon /></Slot>
        <Chevrons className="w-[50px]" />
        <Grip className="w-[5px]" />
        <Slot className="w-[62px]"><AbcLabel /></Slot>
        <Chevrons className="w-[27px]" />
        <Grip className="w-[20px] pl-[11px]" />
        <Slot className="w-[60px]"><GlobeBinoc /></Slot>
        <Grip className="w-[30px] pl-[15px]" />
        <Slot className="w-[50px]"><PythonIcon /></Slot>
        <Grip className="w-[25px] pl-[18px]" />
        <Slot className="w-[62px]"><HelpBook /></Slot>
        <Grip className="w-[20px] pl-[14px]" />
      </div>

      {/* toolbar 3 */}
      <div className={`h-[66px] ${toolbarBg}`}>
        <Grip className="ml-[10px] w-[11px]" />
        <div className="flex h-[55px] w-[56px] items-center justify-center rounded-[2px] border border-[#b4b4b4] bg-[#dcdcdc]">
          <LogoX />
        </div>
      </div>

      {/* main area */}
      <div className="flex h-[498px] shrink-0">
        {/* left docks */}
        <div className="flex w-[227px] shrink-0 flex-col">
          <div className="flex h-[28px] shrink-0 items-end justify-between pb-[1px] pl-[5px] pr-[2px]">
            <span>Browser</span>
            <div className="pb-[5px]"><FloatBtns /></div>
          </div>
          <div className="flex h-[51px] shrink-0 items-center gap-[11px] pl-[11px]">
            <NewLayer />
            <RefreshIcon />
            <FilterIcon />
            <CollapseIcon />
            <div className="ml-[1px]"><InfoIcon size={28} /></div>
          </div>
          <div className="flex h-[189px] shrink-0 flex-col border border-[#b4b4b4] bg-white">
            <div className="flex min-h-0 flex-1">
              <div className="min-w-0 flex-1 overflow-hidden pt-[2px]">
                {browserRows.map(r => (
                  <div key={r.label} className="flex h-[32px] items-center whitespace-nowrap">
                    <div className="flex w-[28px] shrink-0 pl-[7px]">{r.arrow && <Tri dir="right" s={13} />}</div>
                    <div className="mr-[5px] flex w-[31px] shrink-0 items-center justify-center">
                      {r.small ? <div className="flex h-[28px] w-[28px] items-center justify-center [&>svg]:h-[28px] [&>svg]:w-[28px]">{r.icon}</div> : r.icon}
                    </div>
                    <span>{r.label}</span>
                  </div>
                ))}
              </div>
              <div className="flex w-[25px] shrink-0 flex-col border-l border-[#b4b4b4]">
                <ScrollBtn dir="up" className="h-[24px] border-b border-[#c4c4c4]" />
                <div className="h-[46px] bg-gradient-to-r from-white to-[#f4f4f4]" />
                <div className="flex-1 bg-[#e3e3e3]" />
                <ScrollBtn dir="down" className="h-[24px] border-t border-[#c4c4c4]" />
              </div>
            </div>
            <div className="flex h-[25px] shrink-0 border-t border-[#b4b4b4]">
              <ScrollBtn dir="left" className="w-[24px] border-r border-[#c4c4c4]" />
              <div className="w-[101px] bg-gradient-to-b from-white to-[#f4f4f4]" />
              <div className="w-[52px] bg-[#e3e3e3]" />
              <ScrollBtn dir="right" className="w-[24px] border-x border-[#c4c4c4]" />
              <div className="flex-1 bg-gradient-to-b from-white to-[#f4f4f4]" />
            </div>
          </div>
          <div className="flex h-[14px] shrink-0 items-center justify-center">
            <svg width="16" height="2" fill="#c2c2c2">
              {[0, 3, 6, 9, 12, 15].map(x => <rect key={x} x={x} y="0" width="1" height="1" />)}
            </svg>
          </div>
          <div className="flex h-[25px] shrink-0 items-center justify-between pl-[5px] pr-[2px]">
            <span>Layers</span>
            <FloatBtns />
          </div>
          <div className="flex h-[49px] shrink-0 items-center gap-[11px] pb-[3px] pl-[10px]">
            <BrushIcon />
            <ClipIcon />
            <EyeIcon />
            <FilterIcon down size={31} />
            <Chevrons className="ml-[27px]" />
          </div>
          <div className="flex-1 border border-[#b4b4b4] bg-white" />
        </div>

        {/* left gutter */}
        <div className="flex w-[10px] shrink-0 items-center justify-center">
          <Grip />
        </div>

        {/* center */}
        <div className="flex w-[631px] shrink-0 flex-col">
          <div className="flex h-[58px] shrink-0 items-center pb-[3px] pl-[17px] text-[36px] font-bold">
            Recent Projects
          </div>
          <div className="flex-1 border border-[#b4b4b4] bg-white" />
        </div>

        {/* right gutter */}
        <div className="flex w-[17px] shrink-0 items-center justify-end pr-[6px]">
          <Grip />
        </div>

        {/* right dock */}
        <div className="flex min-w-0 flex-1 flex-col">
          <div className="flex h-[28px] shrink-0 items-end justify-between pb-[2px] pl-[5px] pr-[3px] text-[19.500px]">
            <span>NextGIS Connect</span>
            <div className="pb-[4px]"><FloatBtns /></div>
          </div>
          <div className="flex h-[43px] shrink-0 items-center bg-gradient-to-b from-[#f6f6f6] to-[#f0f0f0]">
            <Grip className="w-[15px] justify-end" />
            <div className="ml-[13px]">
              <svg width="20" height="24" viewBox="0 0 20 24">
                <path d="M10 2C5 6 4 14 6 22M15 1L3 21M1 8c4-2 9-1 13 3" fill="none" stroke="#0d6ee0" strokeWidth="2.4" />
                <path d="M20 13h-6v-3l-6 5 6 5v-3h6z" fill="#22d32a" stroke="#119118" strokeWidth="0.6" />
              </svg>
            </div>
            <div className="ml-[14px]">
              <svg width="22" height="24" viewBox="0 0 22 24">
                <path d="M10 2C5 6 4 14 6 22M15 1L3 21M1 8c4-2 9-1 13 3" fill="none" stroke="#c9c9c9" strokeWidth="2.4" />
                <path d="M9 13h13l-6.500 8z" fill="#a9a9a9" />
              </svg>
            </div>
            <div className="ml-[9px] h-[19px] w-px bg-[#cfcfcf]" />
            <div className="ml-[12px]">
              <svg width="20" height="20" viewBox="0 0 20 20">
                <path d="M0 2h7l2 2h8v13H0z" fill="#3592d6" />
                <path d="M10 14h3v-3h3v3h3v3h-3v3h-3v-3h-3z" fill="#22d32a" stroke="#0f6b14" strokeWidth="0.6" />
              </svg>
            </div>
            <div className="ml-[15px]">
              <svg width="14" height="14" viewBox="0 0 14 14" fill="none" stroke="#1683e0" strokeWidth="1.8">
                <path d="M12 4A5.800 5.800 0 1 0 13 7.500" />
                <path d="M12.500 0.500v4h-4" />
              </svg>
            </div>
            <div className="ml-[15px] h-[19px] w-px bg-[#cfcfcf]" />
            <div className="ml-[11px]">
              <svg width="20" height="20" viewBox="0 0 20 20" fill="none" stroke="#cfd4d9">
                <rect x="0.5" y="0.5" width="19" height="19" fill="#f0f0f0" />
                <path d="M1 5h18M2 15l5-5 5 5 2-2 5 4" />
              </svg>
            </div>
            <div className="ml-[11px] h-[19px] w-px bg-[#cfcfcf]" />
            <div className="ml-[11px]">
              <svg width="21" height="21" viewBox="0 0 24 24" fill="none" stroke="#4a9ee8" strokeWidth="1.2">
                <path d="M12 1l3 3 4-1 1 4 3 3-2 2 2 3-3 2-1 4-4-1-3 3-3-3-4 1-1-4-3-2 2-3-2-2 3-3 1-4 4 1z" />
                <circle cx="12" cy="12" r="6" />
              </svg>
            </div>
            <span className="ml-[17px] text-[22px] font-bold text-[#0b3fd6]">?</span>
          </div>
          <div className="ml-[3px] mr-[5px] flex h-[379px] shrink-0 flex-col border border-[#b4b4b4] bg-white">
            <div className="flex min-h-0 flex-1">
              <div className="min-w-0 flex-1 overflow-hidden">
                {connectRows.map(r => (
                  <div key={r.label} className={`flex h-[32px] items-center whitespace-nowrap pl-[116px] ${r.active ? 'bg-[#eeeeee]' : ''}`}>
                    <div className="flex w-[28px] shrink-0">{r.arrow && <Tri dir="right" s={13} />}</div>
                    <div className="flex w-[34px] shrink-0 items-center">{r.icon}</div>
                    <span className="pt-[2px]">{r.label}</span>
                  </div>
                ))}
              </div>
              <div className="flex w-[24px] shrink-0 flex-col border-l border-[#d0d0d0]">
                <ScrollBtn dir="up" className="h-[24px]" />
                <div className="h-[102px] bg-[#e3e3e3]" />
                <div className="h-[140px] bg-gradient-to-r from-white to-[#f4f4f4]" />
                <div className="flex-1 bg-[#e3e3e3]" />
                <ScrollBtn dir="down" className="h-[24px] border-t border-[#c4c4c4]" />
              </div>
            </div>
            <div className="flex h-[25px] shrink-0 border-t border-[#b4b4b4]">
              <ScrollBtn dir="left" className="w-[24px] border-r border-[#c4c4c4]" />
              <div className="w-[292px] bg-gradient-to-b from-white to-[#f4f4f4]" />
              <div className="w-[24px] bg-[#e3e3e3]" />
              <ScrollBtn dir="right" className="w-[24px] border-x border-[#c4c4c4]" />
              <div className="flex-1 bg-gradient-to-b from-white to-[#f4f4f4]" />
            </div>
          </div>
          <div className="ml-[3px] mr-[5px] mt-[45px] h-px bg-[#b4b4b4]" />
        </div>
      </div>

      {/* status bar */}
      <div className="flex h-[43px] shrink-0 items-center text-[18px]">
        <div className="ml-[4px] flex h-[33px] w-[384px] shrink-0 items-center gap-[8px] rounded-[3px] border border-[#b4b4b4] bg-white pl-[13px] text-[21px] text-[#8a8a8a]">
          <Search size={22} stroke="#9a9a9a" strokeWidth={2} />
          <span className="pt-[1px]">Type to locate (Ctrl+K)</span>
        </div>
        <div className="ml-[10px] w-[61px] shrink-0 overflow-hidden whitespace-nowrap pt-[1px] text-[17px]">Ready to</div>
        <div className="ml-[3px] h-[33px] w-[9px] shrink-0 rounded-[2px] border border-[#b4b4b4] bg-white" />
        <div className="ml-[4px] shrink-0">
          <svg width="29" height="30" viewBox="0 0 29 30">
            <path d="M3 8c2-6 8-8 12-5s6 9 7 13c1 6-2 11-7 11S6 22 4 16z" fill="#3c3c3c" />
            <path d="M8 3l4 11" stroke="#fff" strokeWidth="2" />
            <circle cx="16" cy="21" r="4" fill="#fff" stroke="#222" />
            <circle cx="16" cy="21" r="1.500" fill="#222" />
            <path d="M19 6l2-2M23 10l3-1M3 26l1-1M24 3l1-1" stroke="#555" strokeWidth="1.2" />
          </svg>
        </div>
        <div className="ml-[13px] w-[7px] shrink-0 overflow-hidden text-[#8a8a8a]">a</div>
        <div className="flex h-[33px] w-[113px] shrink-0 rounded-[3px] border border-[#ababab] bg-white">
          <div className="flex w-[74px] shrink-0 items-center justify-end overflow-hidden whitespace-nowrap text-[17px]">52245008</div>
          <div className="flex flex-1 items-center justify-center bg-[#f1f1f1]">
            <Tri dir="down" s={15} c="#6e6e6e" />
          </div>
        </div>
        <div className="ml-[12px] shrink-0">
          <svg width="23" height="27" viewBox="0 0 23 27">
            <path d="M5 11V7a6.500 6.500 0 0 1 13 0v4" fill="none" stroke="#8a8a8a" strokeWidth="3" />
            <rect x="0" y="10" width="23" height="17" rx="3" fill="#686868" />
          </svg>
        </div>
        <div className="ml-[10px] w-[7px] shrink-0 overflow-hidden">r</div>
        <SpinBox value="100%" className="h-[33px] w-[125px]" />
        <div className="ml-[8px] w-[6px] shrink-0 overflow-hidden">a</div>
        <SpinBox value="0,0 °" className="ml-[9px] h-[33px] w-[113px]" />
        <div className="ml-[6px] flex h-[25px] w-[25px] shrink-0 items-center justify-center border border-[#b4b4b4] bg-white">
          <svg width="17" height="17" viewBox="0 0 17 17" fill="none" stroke="#111" strokeWidth="2.6">
            <path d="M2 8l4 7 8-14" />
          </svg>
        </div>
        <span className="ml-[9px] w-[76px] shrink-0">Render</span>
        <svg width="27" height="27" viewBox="0 0 27 27" fill="none" stroke="#777" strokeWidth="1.4" className="shrink-0">
          <circle cx="13.500" cy="13.500" r="9.500" />
          <ellipse cx="13.500" cy="13.500" rx="4.500" ry="9.500" />
          <path d="M1 13.500h25M3 8h21M3 19h21" />
        </svg>
        <span className="ml-[3px] w-[120px] shrink-0">EPSG:4326</span>
        <svg width="28" height="30" viewBox="0 0 28 30" className="shrink-0">
          <path d="M14 1C6 1 0 6 0 13c0 7 6 12 14 12h4l6 4-1-7c3-2 5-5 5-9C28 6 22 1 14 1z" fill="#555" />
          <circle cx="8" cy="13" r="2" fill="#fff" />
          <circle cx="14" cy="13" r="2" fill="#fff" />
          <circle cx="20" cy="13" r="2" fill="#fff" />
        </svg>
      </div>

      {/* dialog */}
      <div className="absolute left-[408px] top-[322px] flex h-[211px] w-[444px] flex-col border-2 border-[#6b6b6b] bg-[#eeeeee] text-[20.200px] shadow-[0_4px_14px_rgba(0,0,0,0.35)]">
        <div className="flex h-[49px] shrink-0 items-center bg-white pl-[13px] pr-[21px]">
          <QLogo />
          <span className="ml-[4px] whitespace-nowrap">Create WFS service</span>
          <svg width="16" height="16" stroke="#111" className="ml-auto">
            <path d="M0.5 0.5l15 15M15.500 0.5l-15 15" />
          </svg>
        </div>
        <div className="flex flex-1 flex-col pl-[19px] pr-[19px] pt-[18px]">
          <div className="flex h-[28px] items-center whitespace-nowrap">The number of objects returned by default</div>
          <div className="mt-[9px] flex h-[35px] rounded-[3px] border border-[#5cb1ee] bg-white">
            <div className="flex flex-1 items-center pl-[4px]">
              <span className="flex h-[23px] items-center border-l-2 border-[#ef8a2e] bg-[#0078d7] pr-[1px] pt-[1px] text-[19px] text-white">1000</span>
            </div>
            <div className="flex w-[24px] flex-col items-center justify-center gap-[2px] border-l border-[#c4c4c4] bg-[#f1f1f1]">
              <Tri dir="up" s={14} c="#6e6e6e" />
              <Tri dir="down" s={14} c="#6e6e6e" />
            </div>
          </div>
          <div className="mt-[13px] flex justify-end gap-[11px]">
            <div className="flex h-[36px] w-[80px] items-center justify-center rounded-[3px] border border-[#5cb1ee] bg-gradient-to-b from-white to-[#e5e9ee]">OK</div>
            <div className="flex h-[36px] w-[79px] items-center justify-center rounded-[3px] border border-[#ababab] bg-gradient-to-b from-white to-[#ececec]">Cancel</div>
          </div>
        </div>
        {/* red annotation */}
        <div className="absolute left-[6px] top-[98px] h-[48px] w-[423px] rounded-[12px] border-[4px] border-[#ff0000]" />
        <svg width="192" height="22" viewBox="0 0 192 22" className="absolute left-[49px] top-[160px]">
          <path d="M0 9h165v4H0z" fill="#ff0000" />
          <path d="M150 0l42 10.500L150 21l8-10.500z" fill="#ff0000" />
        </svg>
      </div>
    </div>
  )
}
